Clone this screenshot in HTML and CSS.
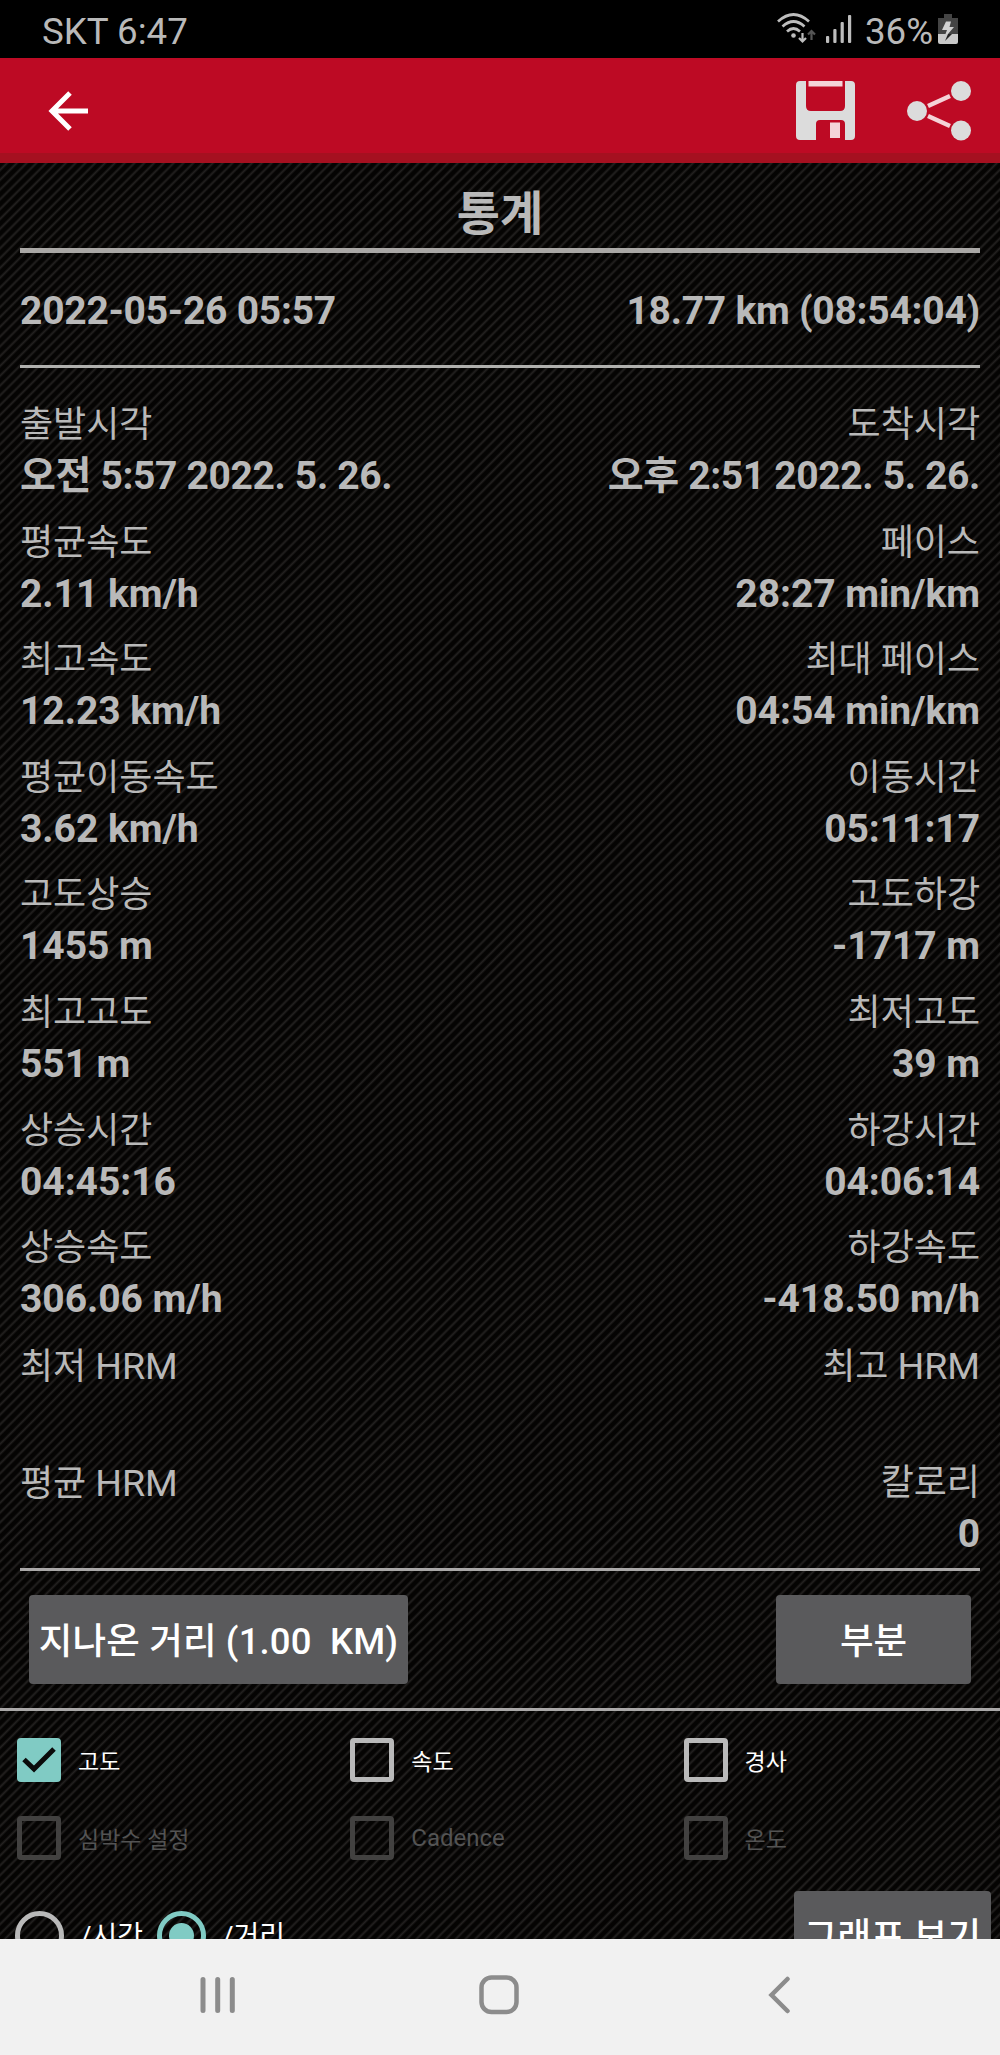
FILE: index.html
```
<!DOCTYPE html>
<html lang="ko">
<head>
    <meta charset="UTF-8">
    <meta name="viewport" content="width=device-width, initial-scale=1.0">
    <title>통계</title>
    <link rel="stylesheet" href="styles.css">
</head>
<body>
    <div class="status-bar">
        <span>SKT 6:47</span>
        <div class="status-icons">
            <svg class="wifi" width="40" height="32" viewBox="0 0 40 32" fill="none" stroke="#bdbdbd" stroke-width="2.7">
                <path d="M1 8.500Q16.500 -5.500 32 8.500M5.500 13.500Q16.500 3.500 27.500 13.500M10 18.500Q16.500 12.500 23 18.500"/>
                <circle cx="16.500" cy="22.500" r="2.300" fill="#bdbdbd" stroke="none"/>
                <path d="M25.500 20V28M22 25L25.500 28.500L29 25" stroke-width="2.200"/>
                <path d="M34.500 27V18M31 21.500L34.500 18L38 21.500" stroke="#555" stroke-width="2.200"/>
            </svg>
            <svg class="signal" width="26" height="30" viewBox="0 0 26 30" fill="#bdbdbd">
                <rect x="0" y="22" width="3.200" height="7" rx="1"/>
                <rect x="7.300" y="15" width="3.200" height="14" rx="1"/>
                <rect x="14.600" y="8" width="3.200" height="21" rx="1"/>
                <rect x="22" y="1" width="3.200" height="28" rx="1"/>
            </svg>
            <span>36%</span>
            <svg class="battery" width="20" height="30" viewBox="0 0 20 30">
                <path d="M6 0H14V4H20V20H0V4H6Z" fill="#444"/>
                <path d="M0 20H20V28Q20 30 18 30H2Q0 30 0 28Z" fill="#c8c8c8"/>
                <path d="M10 20H14L7 27Z" fill="#222"/>
                <path d="M8 7.500H13L11.500 13H16L10 20H7.500L9 16H4Z" fill="#d0d0d0"/>
            </svg>
        </div>
    </div>

    <div class="app-bar">
        <svg class="back" width="40" height="40" viewBox="0 0 40 40" fill="none" stroke="#fff" stroke-width="5">
            <path d="M40 20H4M22 2L4 20L22 38"/>
        </svg>
        <div class="actions">
            <svg width="60" height="60" viewBox="0 0 60 60">
                <path d="M4 0H10V25Q10 30 15 30H44Q49 30 49 25V0H55Q59 0 59 4V55Q59 59 55 59H49V43Q49 39 45 39H24Q20 39 20 43V59H4Q0 59 0 55V4Q0 0 4 0Z" fill="#dcdcdc"/>
                <path d="M12.500 0H46.500V5.500H12.500ZM34 41.500H44V57H34Z" fill="#f4d3d8"/>
            </svg>
            <svg width="64" height="60" viewBox="0 0 64 60">
                <path d="M21 25L43 15M21 35L43 45" stroke="#f4d3d8" stroke-width="4.500"/>
                <g fill="#dcdcdc">
                    <circle cx="10" cy="30" r="10"/>
                    <circle cx="54" cy="10" r="10"/>
                    <circle cx="54" cy="49.500" r="10"/>
                </g>
            </svg>
        </div>
    </div>

    <main class="content">
        <section class="stats">
            <h1>통계</h1>
            <div class="summary">
                <span>2022-05-26 05:57</span>
                <span>18.77 km (08:54:04)</span>
            </div>
            <dl class="stat-grid">
                <div><dt>출발시각</dt><dd class="date">오전 5:57 2022. 5. 26.</dd></div>
                <div><dt>도착시각</dt><dd class="date">오후 2:51 2022. 5. 26.</dd></div>
                <div><dt>평균속도</dt><dd>2.11 km/h</dd></div>
                <div><dt>페이스</dt><dd>28:27 min/km</dd></div>
                <div><dt>최고속도</dt><dd>12.23 km/h</dd></div>
                <div><dt>최대 페이스</dt><dd>04:54 min/km</dd></div>
                <div><dt>평균이동속도</dt><dd>3.62 km/h</dd></div>
                <div><dt>이동시간</dt><dd>05:11:17</dd></div>
                <div><dt>고도상승</dt><dd>1455 m</dd></div>
                <div><dt>고도하강</dt><dd>-1717 m</dd></div>
                <div><dt>최고고도</dt><dd>551 m</dd></div>
                <div><dt>최저고도</dt><dd>39 m</dd></div>
                <div><dt>상승시간</dt><dd>04:45:16</dd></div>
                <div><dt>하강시간</dt><dd>04:06:14</dd></div>
                <div><dt>상승속도</dt><dd>306.06 m/h</dd></div>
                <div><dt>하강속도</dt><dd>-418.50 m/h</dd></div>
                <div><dt>최저 <span>HRM</span></dt><dd></dd></div>
                <div><dt>최고 <span>HRM</span></dt><dd></dd></div>
                <div><dt>평균 <span>HRM</span></dt><dd></dd></div>
                <div><dt>칼로리</dt><dd>0</dd></div>
            </dl>
        </section>

        <div class="buttons">
            <button class="distance">지나온 거리 (1.00  KM)</button>
            <button class="part">부분</button>
        </div>

        <div class="checks">
            <label class="checked">
                <i class="box"><svg width="34" height="26" viewBox="0 0 34 26" fill="none" stroke="#0a0a0a" stroke-width="5"><path d="M2 12.500L12 22L32 2"/></svg></i>고도
            </label>
            <label><i class="box"></i>속도</label>
            <label><i class="box"></i>경사</label>
            <label class="disabled"><i class="box"></i>심박수 설정</label>
            <label class="disabled cadence"><i class="box"></i>Cadence</label>
            <label class="disabled"><i class="box"></i>온도</label>
        </div>

        <div class="graph-row">
            <label><i class="radio"></i><span>/시간</span></label>
            <label class="selected"><i class="radio"></i><span>/거리</span></label>
            <button class="graph">그래프 보기</button>
        </div>
    </main>

    <nav class="nav-bar">
        <svg width="36" height="38" viewBox="0 0 36 38" stroke="#8c8c8c" stroke-width="5" stroke-linecap="round">
            <path d="M3 3.500V34.500M17.700 3.500V34.500M32.300 3.500V34.500"/>
        </svg>
        <svg width="40" height="40" viewBox="0 0 40 40" fill="none" stroke="#8c8c8c" stroke-width="4.500">
            <rect x="2.500" y="2.500" width="35" height="34.500" rx="10"/>
        </svg>
        <svg width="24" height="38" viewBox="0 0 24 38" fill="none" stroke="#8c8c8c" stroke-width="4.500" stroke-linecap="round">
            <path d="M20.500 3L4.500 19L20.500 35"/>
        </svg>
    </nav>
</body>
</html>
```
FILE: styles.css
```
* {
    margin: 0;
    padding: 0;
    box-sizing: border-box;
}

body {
    width: 1000px;
    height: 2055px;
    display: flex;
    flex-direction: column;
    overflow: hidden;
    background: #000;
    color: #b9b9b9;
    font-family: Roboto, "Noto Sans CJK KR", sans-serif;
}

svg {
    display: block;
    flex: none;
}

.status-bar {
    height: 58px;
    flex: none;
    display: flex;
    justify-content: space-between;
    padding: 3px 42px 0;
    font-size: 36.700px;
    line-height: 57px;
}

.status-icons {
    display: flex;
}

.wifi {
    margin-top: 10px;
}

.signal {
    margin: 11px 13px 0 9px;
}

.battery {
    margin: 11px 0 0 5px;
}

.app-bar {
    height: 105px;
    flex: none;
    display: flex;
    justify-content: space-between;
    padding: 23px 29px 0 48px;
    background: #bd0a24;
    border-bottom: 10px solid #a51020;
}

.back {
    margin-top: 10px;
}

.actions {
    display: flex;
    gap: 51px;
}

.content {
    height: 1776px;
    flex: none;
    overflow: hidden;
    background: repeating-linear-gradient(135deg, #050403 0, #050403 3px, #232120 5px, #050403 6.930px);
}

.stats {
    margin: 0 20px;
    border-bottom: 3px solid #aaa8a8;
}

h1 {
    height: 90px;
    border-bottom: 5px solid #aaa8a6;
    font-size: 47px;
    line-height: 101px;
    text-align: center;
}

.summary {
    height: 115px;
    display: flex;
    justify-content: space-between;
    border-bottom: 3px solid #b0b0ae;
    font-size: 39px;
    font-weight: 700;
    line-height: 117px;
    letter-spacing: -0.250px;
}

.stat-grid {
    height: 1200px;
    padding-top: 31px;
    display: grid;
    grid-template-columns: 1fr 1fr;
    grid-auto-rows: 117.600px;
}

.stat-grid div:nth-child(even) {
    text-align: right;
}

dt {
    height: 51px;
    font-size: 36px;
    line-height: 52px;
}

dt span {
    font-size: 37.500px;
}

dd {
    height: 52px;
    font-size: 39px;
    font-weight: 700;
    line-height: 52px;
    letter-spacing: -0.050px;
}

.date {
    letter-spacing: -0.350px;
}

.buttons {
    height: 140px;
    display: flex;
    justify-content: space-between;
    padding: 24px 29px 0;
    border-bottom: 3px solid #aaa8a8;
}

button {
    height: 89px;
    padding-bottom: 3px;
    border: none;
    border-radius: 4px;
    background: #5a5a5c;
    color: #fff;
    font-family: inherit;
    font-size: 36.500px;
    font-weight: 500;
    white-space: pre;
}

.distance {
    width: 379px;
    letter-spacing: 0.150px;
}

.part {
    width: 195px;
}

.checks {
    display: grid;
    grid-template-columns: repeat(3, 333.300px);
    grid-auto-rows: 78px;
    padding: 10px 0 0 17px;
}

.checks label {
    display: flex;
    align-items: center;
    gap: 17px;
    color: #fff;
    font-size: 23px;
}

.checks .cadence {
    font-size: 24px;
}

.box {
    width: 44px;
    height: 44px;
    display: flex;
    align-items: center;
    justify-content: center;
    border: 5px solid #b9b9b9;
    border-radius: 4px;
}

.checked .box {
    background: #80cbc4;
    border-color: #80cbc4;
}

.checks .disabled {
    color: #535353;
}

.disabled .box {
    border-color: #424140;
}

.graph-row {
    display: flex;
    align-items: center;
    padding: 14px 9px 0 15px;
}

.graph-row label {
    width: 142px;
    display: flex;
    align-items: center;
    gap: 16px;
    color: #fff;
    font-size: 28px;
}

.graph-row span {
    padding-bottom: 3px;
}

.radio {
    width: 49px;
    height: 49px;
    flex: none;
    border: 5px solid #b9b9b9;
    border-radius: 50%;
}

.selected .radio {
    padding: 7px;
    border-color: #80cbc4;
    background: #80cbc4 content-box;
}

.graph {
    width: 197px;
    margin-left: auto;
    padding-bottom: 5px;
}

.nav-bar {
    height: 116px;
    flex: none;
    display: grid;
    grid-template-columns: 279px 288px 24px;
    align-items: center;
    padding: 0 0 5px 200px;
    background: #f1f1f1;
}
```
